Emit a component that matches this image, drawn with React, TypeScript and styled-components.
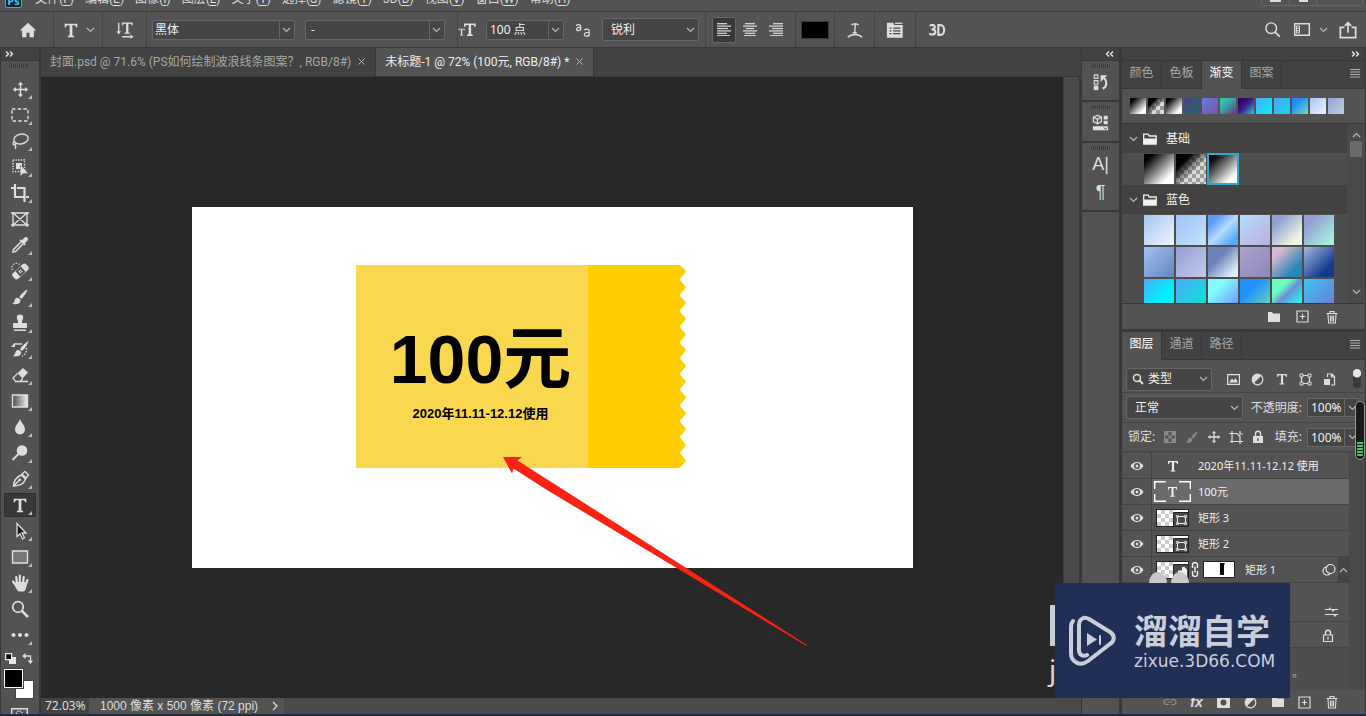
import React from "react";
import styled, { createGlobalStyle, css } from "styled-components";

const GlobalStyle = createGlobalStyle`
  *, *::before, *::after { box-sizing: border-box; }
  body { margin: 0; background: #282828; }
  body, button, input, select {
    font-family: "Noto Sans", "Noto Sans CJK SC", sans-serif;
    font-size: 12px;
    line-height: 16px;
    color: #dedede;
  }
  button { margin: 0; padding: 0; border: 0; background: none; cursor: pointer; }
  svg { display: block; flex: none; }
  ul { list-style: none; margin: 0; padding: 0; }
`;

const c = {
  panel: "#535353",
  dark: "#424242",
  line: "#383838",
  list: "#4a4a4a",
  field: "#454545",
  edge: "#666666",
  icon: "#dedede",
  dim: "#a8a8a8",
};

/* ---------- icons ---------- */

type IconProps = { size?: number; w?: number; h?: number; box?: string; children: React.ReactNode };
const Icon = ({ size = 20, w, h, box, children }: IconProps) => (
  <svg
    width={w ?? size}
    height={h ?? size}
    viewBox={box ?? "0 0 20 20"}
    fill="none"
    stroke="currentColor"
    strokeWidth="1.4"
    aria-hidden="true"
  >
    {children}
  </svg>
);

const Chevron = ({ up = false }: { up?: boolean }) => (
  <Icon w={9} h={6} box="0 0 9 6">
    <path d={up ? "M1 5 4.5 1.5 8 5" : "M1 1 4.5 4.5 8 1"} stroke="#b8b8b8" strokeWidth="1.2" />
  </Icon>
);

const DoubleChevron = ({ left = false }: { left?: boolean }) => (
  <Icon w={9} h={6} box="0 0 9 6">
    <path
      d={left ? "M4 .5 1.5 3 4 5.500M8 .5 5.500 3 8 5.500" : "M1 .5 3.500 3 1 5.500M5 .5 7.500 3 5 5.500"}
      strokeWidth="1.4"
    />
  </Icon>
);

const serifT = "M3 3h14v4.200h-1.200C15.400 5.400 14.800 4.800 13 4.800h-1.500v10.400c0 1 .4 1.300 2 1.300V18h-7v-1.500c1.600 0 2-.3 2-1.300V4.800H7C5.200 4.800 4.600 5.400 4.200 7.200H3z";
const TypeIcon = ({ size = 18 }: { size?: number }) => (
  <Icon size={size}>
    <path d={serifT} fill="currentColor" stroke="none" />
  </Icon>
);

const PlusBox = () => (
  <Icon size={13} box="0 0 13 13">
    <path d="M1 1h11v11H1zM6.500 3.800v5.400M3.800 6.500h5.400" strokeWidth="1.2" />
  </Icon>
);
const TrashIcon = () => (
  <Icon size={14} box="0 0 14 14">
    <path d="M1.500 3.500h11M5 3V1.500h4V3M3 4l.6 9h6.800L11 4M5.500 5.500v6M7 5.500v6M8.500 5.500v6" strokeWidth="1.1" />
  </Icon>
);
const FolderSolid = () => (
  <Icon w={14} h={12} box="0 0 14 12">
    <path d="M1 1h4l1 1.500h7V11H1z" fill="currentColor" stroke="none" />
  </Icon>
);
const FolderOutline = () => (
  <Icon w={14} h={12} box="0 0 14 12">
    <path d="M.7 11V1.200h4.500l1 1.800h7V11z" strokeWidth="1.300" />
    <path d="M1 5.500h12V11H1z" fill="currentColor" stroke="none" />
  </Icon>
);
const MenuLines = () => (
  <Icon w={10} h={9} box="0 0 10 9">
    <path d="M0 .5h10M0 3h10M0 5.500h10M0 8h10" stroke="#b0b0b0" strokeWidth="1" />
  </Icon>
);
const LockIcon = ({ open = false }: { open?: boolean }) => (
  <Icon w={12} h={14} box="0 0 12 14">
    <path d="M3.500 6V3.800a2.500 2.500 0 0 1 5 0V6" strokeWidth="1.400" />
    {open ? (
      <path d="M1.500 6h9v6.500h-9zM6 8v2.500" strokeWidth="1.200" />
    ) : (
      <path d="M1 6h10v7H1zm5 2a1 1 0 0 0-.6 1.700V11h1.200V9.700A1 1 0 0 0 6 8z" fill="currentColor" stroke="none" fillRule="evenodd" />
    )}
  </Icon>
);
const MoveIcon = ({ size = 18 }: { size?: number }) => (
  <Icon size={size}>
    <path d="M10 3v14M3 10h14" strokeWidth="1.800" />
    <path
      d="M10 1l3 3.500H7zM10 19l3-3.500H7zM1 10l3.500-3v6zM19 10l-3.500-3v6z"
      fill="currentColor"
      stroke="none"
    />
  </Icon>
);
const BrushIcon = ({ size = 18 }: { size?: number }) => (
  <Icon size={size}>
    <path d="M18.500 1.500c-3 1.500-7 5-9.300 8.500l2.300 2.200c3-2.700 6-7 7-10.700z" fill="currentColor" stroke="none" />
    <path d="M8.300 11c-2.500-.4-4 1.200-4.300 3.200-.2 1.500-1.200 2.800-2.700 3.300 3.500 1.300 9.500.5 9.300-4.200z" fill="currentColor" stroke="none" />
  </Icon>
);
const EyeIcon = () => (
  <Icon w={14} h={10} box="0 0 14 10">
    <path d="M.5 5C3.500-.5 10.500-.5 13.500 5 10.500 10.500 3.500 10.500.5 5z" fill="currentColor" stroke="none" />
    <circle cx="7" cy="5" r="3" fill="#4c4c4c" stroke="none" />
    <circle cx="7" cy="5" r="1.500" fill="currentColor" stroke="none" />
  </Icon>
);
const AdjustIcon = () => (
  <Icon size={13} box="0 0 13 13">
    <circle cx="6.500" cy="6.500" r="5.300" strokeWidth="1.200" />
    <path d="M10.300 2.700A5.400 5.400 0 0 0 2.700 10.300z" fill="currentColor" stroke="none" />
  </Icon>
);
const ShapeBoxIcon = () => (
  <Icon size={13} box="0 0 13 13">
    <path d="M3 2.500h7M3 10.500h7M2.500 3v7M10.500 3v7" strokeWidth="1.200" />
    <path d="M1 1h3v3H1zM9 1h3v3H9zM1 9h3v3H1zM9 9h3v3H9z" strokeWidth="1" fill={c.panel} />
  </Icon>
);

const tools: { name: string; icon: React.ReactNode; plain?: boolean }[] = [
  { name: "移动工具", icon: <MoveIcon size={17} /> },
  { name: "矩形选框工具", icon: <Icon><path d="M2 4h16v12H2z" strokeDasharray="3.500 2.200" /></Icon> },
  {
    name: "套索工具",
    icon: (
      <Icon>
        <ellipse cx="11" cy="8" rx="7.300" ry="4.800" transform="rotate(-12 11 8)" />
        <path d="M4.500 11c-1.800.5-2 2.800-.2 3 1.500.1 2-1.300.8-2.300M4.800 14c1.200 1 1.200 2.500.4 4" strokeWidth="1.300" />
      </Icon>
    ),
  },
  {
    name: "对象选择工具",
    icon: (
      <Icon>
        <path d="M3 3h11.500v11.500H3z" strokeDasharray="1.300 1.300" />
        <path d="M6 6h6v3l-2-1v4H6z" fill="currentColor" stroke="none" />
        <path d="M10.500 8v11l2.700-2.700H18z" fill="currentColor" stroke="none" />
      </Icon>
    ),
  },
  { name: "裁剪工具", icon: <Icon><path d="M5 1v13h9M1 5h3M16 14h3M7 5h7.500v11.500M14.500 16v3" strokeWidth="2.200" /></Icon> },
  {
    name: "图框工具",
    plain: true,
    icon: <Icon><path d="M3 4h14v12H3zM3 4l14 12M17 4 3 16M1 4h2M17 4h2M1 16h2M17 16h2M3 3v1M17 3v1M3 16v2M17 16v2" strokeWidth="1.300" /></Icon>,
  },
  {
    name: "吸管工具",
    icon: (
      <Icon>
        <path d="M11 7 3.500 14.500 3 17l2.500-.5L13 9" strokeWidth="1.600" />
        <path d="M9.500 5.500l5 5 1.300-1.300-1-1 2.700-2.700c1.800-1.800-1-4.800-3-3l-2.700 2.700-1-1z" fill="currentColor" stroke="none" />
      </Icon>
    ),
  },
  {
    name: "污点修复画笔工具",
    icon: (
      <Icon>
        <rect x="1.500" y="6.500" width="18" height="8" rx="2.500" transform="rotate(-42 10.500 10.500)" fill="currentColor" stroke="none" />
        <rect x="7" y="7" width="7" height="7" transform="rotate(-42 10.500 10.500)" fill="#4a4a4a" stroke="none" />
        <path d="M8.500 10.500h4M10.500 8.500v4" strokeWidth="1.400" strokeDasharray="1.500 1" />
        <path d="M2.500 9A4.500 4.500 0 0 1 9.500 3.500" strokeDasharray="1.300 1.500" strokeWidth="1.300" />
      </Icon>
    ),
  },
  { name: "画笔工具", icon: <BrushIcon /> },
  {
    name: "仿制图章工具",
    icon: (
      <Icon>
        <path d="M10 1.500a3.200 3.200 0 0 1 3.200 3.300c0 2-1.500 2.700-1.300 5.200H17v5H3v-5h5.100c.2-2.500-1.300-3.200-1.300-5.200A3.200 3.200 0 0 1 10 1.500z" fill="currentColor" stroke="none" />
        <path d="M4 17.200h12" strokeWidth="1.500" />
      </Icon>
    ),
  },
  {
    name: "历史记录画笔工具",
    icon: (
      <Icon>
        <path d="M18.500 2c-3.500 2-6.500 5-8.500 8.200l2 1.800c3-2.700 5.500-6.200 6.500-10z" fill="currentColor" stroke="none" />
        <path d="M9 11c-3-.5-3.500 2-4 3.500-.4 1.500-1.500 2.200-2.500 2.500 3.500 1 9 .5 8.700-4z" fill="currentColor" stroke="none" />
        <path d="M1 8l4-4.500V8z" fill="currentColor" stroke="none" />
        <path d="M4 5h8" strokeWidth="1.500" />
        <path d="M16.500 9c.5 4-1.500 7-4.500 8" strokeDasharray="1.400 1.600" />
      </Icon>
    ),
  },
  {
    name: "橡皮擦工具",
    icon: (
      <Icon>
        <path d="M7.500 8.300 13 3l5 4.500-5.500 6z" fill="currentColor" stroke="none" />
        <path d="M7.500 8.500 3 13l2.500 3.300h4.800l2.500-2.800M5 16.500h13" strokeWidth="1.300" />
      </Icon>
    ),
  },
  {
    name: "渐变工具",
    icon: (
      <Icon>
        <defs>
          <linearGradient id="tool-gradient">
            <stop offset="0" stopColor="#4a4a4a" />
            <stop offset="1" stopColor="#f0f0f0" />
          </linearGradient>
        </defs>
        <path d="M2.500 4h15v12h-15z" fill="url(#tool-gradient)" />
      </Icon>
    ),
  },
  { name: "模糊工具", icon: <Icon><path d="M10 2c1 3.500 5 6.500 5 10.500a5 5 0 0 1-10 0C5 8.500 9 5.500 10 2z" fill="currentColor" stroke="none" /></Icon> },
  {
    name: "减淡工具",
    icon: (
      <Icon>
        <circle cx="12" cy="7.500" r="5.300" fill="currentColor" stroke="none" />
        <path d="M8.500 11 2.500 17" strokeWidth="2" />
      </Icon>
    ),
  },
  {
    name: "钢笔工具",
    icon: (
      <Icon>
        <path d="M3.500 17C3.800 12.500 5 8.500 11.500 6l4 4c-2 5.500-5.500 6.500-12 7z" strokeWidth="1.500" />
        <path d="M3.500 17 9 11.500M12 5l3-2.500L18.500 6 16 9z" />
        <circle cx="9.800" cy="10.800" r="1.400" fill="currentColor" stroke="none" />
      </Icon>
    ),
  },
  { name: "横排文字工具", icon: <TypeIcon size={18} /> },
  {
    name: "路径选择工具",
    icon: <Icon><path d="M7 2.500v13l3-2.700 2.500 5 2-1-2.500-4.800h4z" fill="#1c1c1c" strokeWidth="1.300" /></Icon>,
  },
  { name: "矩形工具", icon: <Icon><path d="M2.500 4h15v12h-15z" fill="#777" /></Icon> },
  {
    name: "抓手工具",
    icon: (
      <Icon>
        <path d="M5.500 11 3 8.500M7 10 6.200 4M9.800 9.500V2.500M13 10l.7-6M15.800 11.500l1.700-4.500" strokeWidth="2.200" strokeLinecap="round" />
        <path d="M4.500 9.500 6 10l1-1h7l3 1c-.3 4-1.500 8-3.500 8.500H8.500C6.500 17 5.500 13 2 9z" fill="currentColor" stroke="none" />
      </Icon>
    ),
  },
  {
    name: "缩放工具",
    plain: true,
    icon: (
      <Icon>
        <circle cx="8" cy="8" r="5.300" strokeWidth="1.700" />
        <path d="M12 12l6 6" strokeWidth="2.500" />
      </Icon>
    ),
  },
  {
    name: "编辑工具栏",
    icon: (
      <Icon>
        <g fill="currentColor" stroke="none">
          <circle cx="3.500" cy="10" r="2" />
          <circle cx="10" cy="10" r="2" />
          <circle cx="16.500" cy="10" r="2" />
        </g>
      </Icon>
    ),
  },
];

/* ---------- frame ---------- */

const Shell = styled.div`
  position: relative;
  display: flex;
  flex-direction: column;
  height: 100vh;
  overflow: hidden;
  background: ${c.panel};
  border-bottom: 2px solid #242c3c;
  color: ${c.icon};
`;

const MenuBar = styled.nav`
  display: flex;
  align-items: flex-end;
  gap: 11px;
  flex: none;
  height: 12px;
  padding: 0 3px 4px 5px;
  overflow: hidden;
  border-bottom: 1px solid ${c.line};
`;
const MenuItem = styled.button`
  flex: none;
  white-space: nowrap;
  font-family: Roboto, "Noto Sans CJK SC", sans-serif;
  u { text-underline-offset: 2px; }
`;
const AppMark = styled.span`
  flex: none;
  width: 17px;
  height: 14px;
  margin: 0 2px -1px 0;
  border: 1px solid #2bb5d6;
  border-radius: 2px;
  background: #0b2536;
  color: #4cc5ee;
  font-weight: 700;
  font-size: 11px;
  line-height: 12px;
  text-align: center;
`;
const WindowButtons = styled.div`
  display: flex;
  margin-left: auto;
  margin-bottom: 1px;
  height: 14px;
  border: 1px solid ${c.edge};
  border-radius: 0 0 3px 3px;
`;
const WindowButton = styled.button<{ $wide?: boolean }>`
  display: flex;
  align-items: flex-end;
  justify-content: center;
  width: ${(p) => (p.$wide ? 46 : 27)}px;
  padding-bottom: 3px;
  & + & { border-left: 1px solid ${c.edge}; }
`;

const OptionsBar = styled.header`
  display: flex;
  align-items: stretch;
  flex: none;
  height: 36px;
  border-bottom: 1px solid ${c.line};
`;
const Segment = styled.div<{ $w?: number; $pad?: string; $gap?: number; $last?: boolean }>`
  display: flex;
  align-items: center;
  justify-content: ${(p) => (p.$w ? "center" : "flex-start")};
  flex: none;
  gap: ${(p) => p.$gap ?? 0}px;
  width: ${(p) => (p.$w ? `${p.$w}px` : "auto")};
  padding: ${(p) => p.$pad ?? "0"};
  border-right: ${(p) => (p.$last ? "0" : `1px solid #444`)};
`;
const Spacer = styled.div`
  flex: 1;
`;
const IconButton = styled.button<{ $w?: number; $h?: number; $gap?: number; $on?: boolean; $dim?: boolean }>`
  display: flex;
  align-items: center;
  justify-content: center;
  flex: none;
  gap: ${(p) => p.$gap ?? 6}px;
  width: ${(p) => p.$w ?? 24}px;
  height: ${(p) => p.$h ?? 26}px;
  border-radius: 2px;
  color: ${(p) => (p.$dim ? "#8a8a8a" : c.icon)};
  ${(p) => p.$on && css`background: #383838; box-shadow: inset 0 0 0 1px ${c.edge};`}
`;
const ColorChip = styled.button`
  width: 28px;
  height: 18px;
  background: #000;
  border: 1px solid #3a3a3a;
`;

const SelectWrap = styled.span<{ $w: number; $h: number; $split?: boolean }>`
  display: grid;
  align-items: center;
  flex: none;
  width: ${(p) => p.$w}px;
  height: ${(p) => p.$h}px;
  background: ${c.field};
  border: 1px solid ${c.edge};
  border-radius: 2px;
  > * { grid-area: 1 / 1; }
  > svg { justify-self: end; margin-right: 3px; pointer-events: none; }
  ${(p) =>
    p.$split &&
    css`background: linear-gradient(to left, transparent 14px, ${c.edge} 14px, ${c.edge} 15px, transparent 15px), ${c.field};`}
`;
const NativeSelect = styled.select<{ $pl?: number }>`
  appearance: none;
  width: 100%;
  height: 100%;
  padding: 0 16px 0 ${(p) => p.$pl ?? 5}px;
  border: 0;
  background: transparent;
  color: #f2f2f2;
`;
type DropProps = { label: string; value: string; w: number; h?: number; split?: boolean; pl?: number };
const Drop = ({ label, value, w, h = 20, split, pl }: DropProps) => (
  <SelectWrap $w={w} $h={h} $split={split}>
    <NativeSelect aria-label={label} $pl={pl} defaultValue={value}>
      <option>{value}</option>
    </NativeSelect>
    <Chevron />
  </SelectWrap>
);

const Work = styled.div`
  display: flex;
  flex: 1;
  min-height: 0;
`;

/* ---------- tool column ---------- */

const ToolColumn = styled.aside`
  display: flex;
  flex-direction: column;
  flex: none;
  width: 41px;
  border-right: 2px solid ${c.line};
  border-left: 1px solid ${c.line};
  overflow: hidden;
`;
const Collapse = styled.button<{ $end?: boolean }>`
  display: flex;
  align-items: center;
  justify-content: ${(p) => (p.$end ? "flex-end" : "flex-start")};
  flex: none;
  width: 100%;
  height: 13px;
  padding: 0 5px 0 4px;
  background: ${c.dark};
  border-bottom: 1px solid ${c.line};
  color: #e8e8e8;
`;
const Grip = styled.div<{ $m?: string }>`
  flex: none;
  width: 20px;
  height: 4px;
  margin: ${(p) => p.$m ?? "3px auto 0"};
  background: repeating-linear-gradient(to right, #3c3c3c 0 1px, transparent 1px 2px);
`;
const ToolList = styled.div`
  display: flex;
  flex-direction: column;
  gap: 2px;
  padding-left: 3px;
`;
const Tool = styled.button<{ $on?: boolean; $plain?: boolean }>`
  position: relative;
  display: flex;
  align-items: center;
  justify-content: center;
  width: 32px;
  height: 24px;
  border-radius: 2px;
  color: ${c.icon};
  ${(p) => p.$on && css`background: #383838; box-shadow: inset 0 0 0 1px #2e2e2e;`}
  &::after {
    content: "";
    position: absolute;
    right: 4px;
    bottom: 2px;
    border: 2px solid transparent;
    border-right-color: #bbb;
    border-bottom-color: #bbb;
    display: ${(p) => (p.$plain ? "none" : "block")};
  }
`;
const ColorTools = styled.div`
  display: flex;
  justify-content: space-between;
  padding: 6px 6px 5px 4px;
`;
const ColorPair = styled.div`
  position: relative;
  flex: none;
  width: 30px;
  height: 30px;
  margin-left: 3px;
`;
const ColorWell = styled.button<{ $front?: boolean }>`
  position: absolute;
  width: 19px;
  height: 19px;
  ${(p) =>
    p.$front
      ? css`left: 0; top: 0; background: #000; border: 1px solid #fff; box-shadow: 0 0 0 1px #444; z-index: 1;`
      : css`right: 0; bottom: 0; background: #fff; border: 1px solid #444;`}
`;
const QuickMask = styled.button`
  display: flex;
  margin: 9px auto 0 10px;
  color: ${c.icon};
`;

/* ---------- document ---------- */

const DocColumn = styled.main`
  display: flex;
  flex-direction: column;
  flex: 1;
  min-width: 0;
`;
const DocTabs = styled.div`
  display: flex;
  flex: none;
  height: 29px;
  background: ${c.dark};
  border-bottom: 1px solid ${c.line};
`;
const DocTab = styled.div<{ $on?: boolean }>`
  display: flex;
  align-items: center;
  gap: 7px;
  padding: 0 10px 1px 9px;
  white-space: nowrap;
  border-right: 1px solid ${c.line};
  background: ${(p) => (p.$on ? c.panel : "transparent")};
  button {
    font-family: Roboto, "Noto Sans CJK SC", sans-serif;
    color: ${(p) => (p.$on ? "#f0f0f0" : c.dim)};
  }
`;
const CloseX = styled.button`
  display: flex;
`;
const DocBody = styled.div`
  display: flex;
  flex: 1;
  min-height: 0;
`;
const Viewport = styled.div`
  display: flex;
  align-items: center;
  justify-content: center;
  flex: 1;
  min-width: 0;
  background: #282828;
`;
const VScroll = styled.div`
  flex: none;
  width: 18px;
  background: ${c.list};
  border-right: 2px solid ${c.line};
  border-left: 1px solid #404040;
`;
const Artboard = styled.div`
  position: relative;
  flex: none;
  width: 721px;
  height: 361px;
  background: #fff;
  color: #000;
`;
const Coupon = styled.div`
  position: absolute;
  left: 164px;
  top: 58px;
  width: 330px;
  height: 203px;
  > svg { position: absolute; inset: 0; }
`;
const CouponText = styled.div`
  position: relative;
  display: flex;
  flex-direction: column;
  align-items: center;
  gap: 7px;
  width: 232px;
  padding: 54px 0 0 18px;
  font-family: "Liberation Sans", "Noto Sans CJK SC", sans-serif;
  white-space: nowrap;
`;
const Amount = styled.strong`
  font-size: 68px;
  line-height: 80px;
  font-weight: 700;
`;
const Validity = styled.span`
  font-size: 13px;
  line-height: 16px;
  font-weight: 700;
`;
const Arrow = styled.svg`
  position: absolute;
  left: 311px;
  top: 250px;
  z-index: 2;
`;

const StatusBar = styled.footer`
  display: flex;
  flex: none;
  height: 16px;
  background: ${c.list};
`;
const StatusItem = styled.span<{ $w?: number; $bg: string }>`
  display: flex;
  align-items: center;
  gap: 14px;
  width: ${(p) => (p.$w ? `${p.$w}px` : "auto")};
  padding: 0 6px 0 ${(p) => (p.$w ? 4 : 11)}px;
  white-space: nowrap;
  font-family: ${(p) => (p.$w ? "inherit" : `"Liberation Sans", "Noto Sans CJK SC", sans-serif`)};
  background: ${(p) => p.$bg};
`;

/* ---------- right dock ---------- */

const IconDock = styled.aside`
  display: flex;
  flex-direction: column;
  flex: none;
  width: 41px;
  border-right: 3px solid ${c.line};
  border-left: 1px solid ${c.line};
`;
const DockGroup = styled.div<{ $h: number }>`
  display: flex;
  flex-direction: column;
  align-items: center;
  flex: none;
  height: ${(p) => p.$h}px;
  border-bottom: 2px solid ${c.line};
`;
const DockGlyph = styled.span`
  font-family: "Liberation Sans", sans-serif;
  font-size: 18px;
  line-height: 28px;
`;
const Panels = styled.aside`
  display: flex;
  flex-direction: column;
  flex: none;
  width: 244px;
  border-right: 1px solid ${c.line};
`;
const PanelTabs = styled.div`
  display: flex;
  align-items: stretch;
  flex: none;
  height: 28px;
  background: ${c.dark};
`;
const PanelTab = styled.button<{ $on?: boolean }>`
  width: 40px;
  padding-bottom: 3px;
  border-right: 1px solid ${c.line};
  border-bottom: 1px solid ${(p) => (p.$on ? c.panel : c.line)};
  background: ${(p) => (p.$on ? c.panel : "transparent")};
  color: ${(p) => (p.$on ? "#fff" : c.dim)};
`;
const TabFill = styled.div`
  display: flex;
  align-items: center;
  justify-content: flex-end;
  flex: 1;
  padding: 0 5px 2px 0;
  border-bottom: 1px solid ${c.line};
`;
const Recent = styled.div`
  display: flex;
  flex: none;
  gap: 2px;
  height: 35px;
  padding: 9px 0 0 8px;
  border-bottom: 1px solid ${c.line};
`;
const Swatch = styled.button<{ $bg: string; $size: number; $on?: boolean }>`
  flex: none;
  width: ${(p) => p.$size}px;
  height: ${(p) => p.$size}px;
  background: ${(p) => p.$bg};
  box-shadow: ${(p) => (p.$on ? "0 0 0 1px #29a9d6, inset 0 0 0 1px #29a9d6" : "none")};
`;
const PresetArea = styled.div`
  display: flex;
  flex: none;
  height: 180px;
  border-bottom: 1px solid ${c.line};
`;
const PresetList = styled.div`
  flex: 1;
  overflow: hidden;
  background: #4e4e4e;
`;
const GroupHead = styled.button`
  display: flex;
  align-items: center;
  gap: 5px;
  width: 100%;
  height: 29px;
  padding-left: 7px;
  background: ${c.dark};
  color: #f2f2f2;
  span { margin-left: 4px; }
`;
const SwatchGrid = styled.div`
  display: grid;
  grid-template-columns: repeat(6, 30px);
  gap: 2px;
  padding: 1px 0 1px 22px;
`;
const PresetScroll = styled.div`
  display: flex;
  flex-direction: column;
  align-items: center;
  width: 18px;
  padding: 8px 0;
  background: ${c.list};
`;
const Thumb = styled.div`
  width: 12px;
  height: 16px;
  margin: 3px 0 auto;
  background: #6a6a6a;
`;
const PanelFoot = styled.div<{ $h: number; $gap: number }>`
  display: flex;
  align-items: center;
  justify-content: flex-end;
  flex: none;
  gap: ${(p) => p.$gap}px;
  height: ${(p) => p.$h}px;
  padding-right: 26px;
`;
const PanelGap = styled.div`
  flex: none;
  height: 3px;
  background: ${c.line};
`;
const FootButton = styled.button<{ $dim?: boolean }>`
  display: flex;
  align-items: center;
  justify-content: center;
  width: 15px;
  height: 18px;
  color: ${(p) => (p.$dim ? "#8c8c8c" : c.icon)};
  font: italic 700 14px/16px "Liberation Sans", sans-serif;
`;

const LayerRowBar = styled.div<{ $h: number; $gap: number; $pl?: number; $pt?: number }>`
  display: flex;
  align-items: center;
  flex: none;
  gap: ${(p) => p.$gap}px;
  height: ${(p) => p.$h}px;
  padding-left: ${(p) => p.$pl ?? 4}px;
  padding-top: ${(p) => p.$pt ?? 0}px;
  border-bottom: 1px solid #444;
  overflow: hidden;
`;
const FilterToggle = styled.button`
  width: 8px;
  height: 19px;
  margin: 0 4px 2px auto;
  border-radius: 4px;
  background: radial-gradient(circle at 4px 4px, #e4e4e4 4px, #3a3a3a 5px);
`;
const PercentLabel = styled.label`
  display: flex;
  align-items: center;
  gap: 5px;
  margin-left: auto;
  padding-right: 6px;
  white-space: nowrap;
`;
const PercentBox = styled.span`
  display: flex;
  align-items: center;
  width: 52px;
  height: 19px;
  border: 1px solid ${c.edge};
  background: ${c.field};
  input {
    width: 37px;
    height: 100%;
    padding: 0 0 0 3px;
    border: 0;
    border-right: 1px solid ${c.edge};
    background: transparent;
    color: #f2f2f2;
  }
  button { display: flex; padding-left: 3px; }
`;
const LayerArea = styled.div`
  display: flex;
  flex: 1;
  min-height: 0;
`;
const LayerList = styled.ul`
  flex: 1;
  padding-top: 1px;
  overflow: hidden;
  background: #4e4e4e;
`;
const LayerScroll = styled.div`
  width: 16px;
  background: ${c.list};
  border-left: 1px solid #474747;
`;
const LayerItem = styled.li`
  display: flex;
  align-items: stretch;
  height: 26px;
  background: ${c.panel};
  border-bottom: 1px solid #444;
  color: #f0f0f0;
  font-size: 11px;
`;
const EyeButton = styled.button`
  display: flex;
  align-items: center;
  justify-content: center;
  flex: none;
  width: 30px;
  border-right: 1px solid #444;
  background: ${c.panel};
  color: ${c.icon};
`;
const LayerBody = styled.div<{ $on?: boolean }>`
  display: flex;
  align-items: center;
  flex: 1;
  padding-left: 2px;
  background: ${(p) => (p.$on ? "#6a6a6a" : "transparent")};
`;
const LayerThumb = styled.span`
  display: flex;
  align-items: center;
  justify-content: center;
  flex: none;
  width: 37px;
  margin-right: 7px;
`;
const MaskGroup = styled.span`
  display: flex;
  align-items: center;
  gap: 4px;
  margin: 0 10px 0 -7px;
`;
const LayerEnd = styled.span`
  display: flex;
  align-items: center;
  align-self: stretch;
  gap: 2px;
  margin-left: auto;
`;
const FoldButton = styled.button`
  display: flex;
  align-items: center;
  justify-content: center;
  align-self: stretch;
  width: 11px;
  background: #454545;
`;
const SubRow = styled.div<{ $h: number; $pr: number }>`
  display: flex;
  align-items: flex-end;
  justify-content: flex-end;
  height: ${(p) => p.$h}px;
  padding: 0 ${(p) => p.$pr}px 4px 0;
  background: ${c.panel};
  border-bottom: 1px solid #444;
`;
const Hint = styled.p`
  margin: 17px 0 0 170px;
  color: #b0b0b0;
`;

/* ---------- overlays ---------- */

const Meter = styled.div`
  position: absolute;
  right: 1px;
  top: 401px;
  width: 10px;
  height: 59px;
  padding: 40px 1px 2px;
  border: 1px solid #9a9a9a;
  border-radius: 5px;
  background: #1a1a1a;
  &::after {
    content: "";
    display: block;
    height: 15px;
    border-radius: 0 0 3px 3px;
    background: repeating-linear-gradient(to bottom, #49c765 0 2px, #1a1a1a 2px 3px);
  }
`;
const Watermark = styled.div`
  position: absolute;
  right: 76px;
  bottom: 16px;
  width: 235px;
  height: 115px;
`;
const UnderMark = styled.div`
  position: absolute;
  left: -6px;
  top: -11px;
  width: 140px;
  height: 126px;
  color: #d8d8d8;
  > svg { position: absolute; left: 0; top: 0; }
  > span { position: absolute; left: 0; top: 80px; font-size: 28px; line-height: 34px; }
`;
const BrandCard = styled.div`
  position: relative;
  display: flex;
  align-items: center;
  gap: 17px;
  height: 100%;
  padding-left: 14px;
  background: #202f55;
  color: #c9ced9;
`;
const BrandText = styled.div`
  display: flex;
  flex-direction: column;
  white-space: nowrap;
  strong { font: 700 34px/38px "Noto Sans CJK SC", sans-serif; }
  span { margin-top: 2px; font: 400 17px/20px "DejaVu Sans", sans-serif; }
`;

/* ---------- data ---------- */

const menus: [string, string][] = [
  ["文件", "F"], ["编辑", "E"], ["图像", "I"], ["图层", "L"], ["文字", "Y"], ["选择", "S"],
  ["滤镜", "T"], ["3D", "D"], ["视图", "V"], ["窗口", "W"], ["帮助", "H"],
];

const g = (...stops: string[]) => `linear-gradient(135deg, ${stops.join(", ")})`;
const bw = g("#000 15%", "#fff 80%");
const fade = `linear-gradient(135deg, #000 25%, transparent 60%), repeating-conic-gradient(#9a9a9a 0 25%, #dcdcdc 0 50%) 0 0 / 8px 8px`;
const recent = [
  bw, fade, bw,
  g("#4b4580", "#276572"), g("#667de6", "#7a50a6"), g("#2fc3ae 20%", "#3f9aa0 50%", "#6a2f80"),
  g("#2b0a5e 20%", "#3d1f8f 50%", "#24d0c8"), g("#4fa9fc", "#00f0ff"), g("#4aa5fb", "#14d8e8"),
  g("#1f8cfb 30%", "#6fe0b4"), g("#a5c6ee", "#eef4ff"), g("#95a1d4", "#c3cfe6"),
];
const blues = [
  g("#a3c6ee", "#eef4ff"), g("#a0c2fb", "#c2e4fc"), g("#5b9bfb 20%", "#b4dcff 50%", "#5aa8f8 85%"),
  g("#b0defc", "#c0aee0"), g("#92a0d4 20%", "#eef4e0 80%"), g("#939dd6 20%", "#a6f2dc 90%"),
  g("#a4c2f4", "#6286bf"), g("#939fd2", "#c2cbe8"), g("#6c82b8 35%", "#d8eef4 85%"),
  g("#aaa4cc", "#8e86bc"), g("#d8b8cc 20%", "#2a86b8 75%"), g("#a4b8e4", "#143a8c 75%"),
  g("#4fa9fc", "#00f0ff 60%"), g("#4fa5fc", "#18d8dc 70%"), g("#84fcff 30%", "#6a8cf8"),
  g("#2090fc 35%", "#6fe0b4"), g("#6affc0 30%", "#6a90d8 50%", "#30e8f0 80%"), g("#3cc4f0", "#7078d4"),
];

const checker = (
  <>
    <rect x=".5" y=".5" width="32" height="17" fill="#fff" stroke="#222" strokeWidth="1" />
    {[0, 1, 2, 3].flatMap((r) =>
      [0, 1, 2, 3].map((k) =>
        (r + k) % 2 ? <rect key={`${r}-${k}`} x={1 + k * 4} y={1 + r * 4} width="4" height="4" fill="#ccc" stroke="none" /> : null
      )
    )}
    <path d="M17.500 3.500h15v14h-15z" fill="#4a4a4a" stroke="#222" strokeWidth="1" />
  </>
);
const ShapeThumb = ({ smart = false }: { smart?: boolean }) => (
  <Icon w={33} h={18} box="0 0 33 18">
    {checker}
    {smart ? (
      <path d="M22 15V9.500h4V6h2.500l2.500 2.500V15z" fill="currentColor" stroke="none" />
    ) : (
      <>
        <path d="M21.500 7.500h8v7h-8z" strokeWidth="1" />
        <path d="M20 6h3v3h-3zM28 6h3v3h-3zM20 13h3v3h-3zM28 13h3v3h-3z" fill="#bdbdbd" stroke="none" />
      </>
    )}
  </Icon>
);
const SelectedType = () => (
  <Icon w={37} h={21} box="0 0 37 21">
    <path d="M.7 8V.7h11M25 .7h11.300V8M36.300 13v7.300H25M12 20.300H.7V13" stroke="#fff" />
    <path d={serifT} transform="translate(12 4) scale(.65)" fill="currentColor" stroke="none" />
  </Icon>
);
const layers = [
  { name: "2020年11.11-12.12 使用", thumb: <TypeIcon size={14} /> },
  { name: "100元", thumb: <SelectedType />, on: true },
  { name: "矩形 3", thumb: <ShapeThumb /> },
  { name: "矩形 2", thumb: <ShapeThumb /> },
  { name: "矩形 1", thumb: <ShapeThumb smart />, mask: true },
];

const toothedEdge = () => {
  let d = "M232 0H322Q324 0 325 1";
  for (let i = 0; i < 13; i++) {
    const t = 6.5 + i * 15.75;
    d += `L328.500 ${t - 2}Q331 ${t} 328.500 ${t + 2}`;
    if (i < 12) d += `L325 ${t + 6}Q323 ${t + 7.9} 325 ${t + 9.700}`;
  }
  return d + "L325 201.500Q323 203 321 203H232Z";
};

const AlignIcon = ({ rows }: { rows: [number, number][] }) => (
  <Icon w={14} h={13} box="0 0 14 13">
    {rows.map(([x, w], i) => (
      <path key={i} d={`M${x} ${i * 2.400 + 0.700}h${w}`} strokeWidth="1.200" />
    ))}
  </Icon>
);
const alignments: { name: string; rows: [number, number][] }[] = [
  { name: "左对齐", rows: [[0, 10], [0, 14], [0, 11], [0, 14], [0, 10], [0, 13]] },
  { name: "居中对齐", rows: [[2, 10], [0, 14], [3, 8], [0, 14], [2, 10], [1, 12]] },
  { name: "右对齐", rows: [[4, 10], [0, 14], [3, 11], [0, 14], [4, 10], [1, 13]] },
];

/* ---------- page parts ---------- */

const Options = () => (
  <OptionsBar>
    <Segment $w={54} $pad="0 0 0 2px">
      <IconButton aria-label="主页">
        <Icon size={18}>
          <path d="M10 2 .8 10.500h2.700V18h4.800v-5h3.400v5h4.800v-7.500h2.700z" fill="currentColor" stroke="none" />
        </Icon>
      </IconButton>
    </Segment>
    <Segment $w={49}>
      <IconButton $w={40} aria-label="文字工具预设">
        <TypeIcon size={18} />
        <Chevron />
      </IconButton>
    </Segment>
    <Segment $w={44}>
      <IconButton aria-label="切换文本取向">
        <Icon size={18}>
          <path d="M3 2v11M7 17.500h9" strokeWidth="1.500" />
          <path d="M.5 11.500h5l-2.500 3.500zM16 15v5l3.500-2.500z" fill="currentColor" stroke="none" />
          <path d={serifT} transform="translate(4 -1) scale(.85)" fill="currentColor" stroke="none" />
        </Icon>
      </IconButton>
    </Segment>
    <Segment $gap={10} $pad="0 12px 0 5px">
      <Drop label="字体系列" value="黑体" w={143} split pl={2} />
      <Drop label="字体样式" value="-" w={140} split pl={5} />
    </Segment>
    <Segment $gap={10} $pad="0 6px 0 0">
      <Icon size={18}>
        <path d={serifT} transform="translate(4 0) scale(.92)" fill="currentColor" stroke="none" />
        <path d={serifT} transform="translate(-1 7) scale(.5)" fill="currentColor" stroke="none" />
      </Icon>
      <Drop label="字体大小" value="100 点" w={78} split pl={3} />
      <Icon w={18} h={16} box="1 0 16 14">
        <path d="M3 3.200C4 1.800 7 1.800 7 4v3.500M7 4.500C2.500 4.500 2.500 7.500 4.500 7.500 5.800 7.500 7 6.500 7 5.500M10 7.200c1-1.600 4.500-1.400 4.500.8V12.500M14.500 9c-5.500 0-5 3.500-2.700 3.500 1.500 0 2.700-1 2.700-2" strokeWidth="1.100" />
      </Icon>
      <Drop label="消除锯齿" value="锐利" w={97} h={23} pl={8} />
    </Segment>
    <Segment $gap={2} $pad="0 7px 0 6px">
      {alignments.map((a, i) => (
        <IconButton key={a.name} $on={i === 0} aria-label={a.name}>
          <AlignIcon rows={a.rows} />
        </IconButton>
      ))}
    </Segment>
    <Segment $w={39}>
      <ColorChip aria-label="文本颜色" />
    </Segment>
    <Segment $w={40}>
      <IconButton aria-label="创建文字变形">
        <Icon size={18}>
          <path d="M6 4.500c2-2 6-2 8 0M10.300 3.500 9.700 13M7.500 13h4.500M2 18c4-4 12-4 16 0" strokeWidth="1.500" />
        </Icon>
      </IconButton>
    </Segment>
    <Segment $w={41}>
      <IconButton aria-label="切换字符和段落面板">
        <Icon size={18}>
          <path d="M1 2h7l1 2.500h9.500V18.500H1z" fill="currentColor" stroke="none" />
          <path d="M4 8h2M8 8h8M4 11h2M8 11h8M4 14h2M8 14h8" stroke="#444" />
          <path d="M10 2.500h8" />
        </Icon>
      </IconButton>
    </Segment>
    <Segment $w={41} $last>
      <IconButton aria-label="3D">
        <Icon size={18}>
          <path d="M2 5.500c1.500-1.500 6-1.500 5.500 1.500-.2 1.800-2 2.300-3.500 2.300 2 0 4.500.6 4.200 3-.4 3.200-5 3.500-6.700 1.500M11.500 4.500v11c4.500.6 6.500-1.500 6.500-5.500s-2-6-6.500-5.500z" strokeWidth="2.300" />
        </Icon>
      </IconButton>
    </Segment>
    <Spacer />
    <Segment $gap={5} $pad="0 8px 0 0" $last>
      <IconButton aria-label="搜索">
        <Icon size={17}>
          <circle cx="8.500" cy="8.500" r="6.300" strokeWidth="1.700" />
          <path d="M13 13l5.500 5.500" strokeWidth="2" />
        </Icon>
      </IconButton>
      <IconButton $w={44} $gap={9} aria-label="工作区">
        <Icon w={16} h={13} box="0 0 16 13">
          <path d="M.7.7h14.600v11.600H.7z" />
          <path d="M2.500 3h3v7h-3zM2.500 5.300h3M2.500 7.700h3" strokeWidth="1" />
        </Icon>
        <Chevron />
      </IconButton>
      <IconButton $w={20} aria-label="共享">
        <Icon size={18}>
          <path d="M6 7H1.500v11.500h17V7H14M10 13V2.500M6.500 5.500 10 2l3.500 3.500" strokeWidth="1.900" />
        </Icon>
      </IconButton>
    </Segment>
  </OptionsBar>
);

const Close = () => (
  <CloseX aria-label="关闭">
    <Icon size={7} box="0 0 7 7">
      <path d="M.5.5l6 6M6.500.5l-6 6" stroke="#bbb" strokeWidth="1" />
    </Icon>
  </CloseX>
);

const Document = () => (
  <DocColumn>
    <DocTabs>
      <DocTab>
        <button>封面.psd @ 71.6% (PS如何绘制波浪线条图案？, RGB/8#)</button>
        <Close />
      </DocTab>
      <DocTab $on>
        <button>未标题-1 @ 72% (100元, RGB/8#) *</button>
        <Close />
      </DocTab>
    </DocTabs>
    <DocBody>
      <Viewport>
        <Artboard>
          <Coupon>
            <svg width="332" height="203" viewBox="0 0 332 203" aria-hidden="true">
              <path d="M0 0h233v203H0z" fill="#f9d74f" />
              <path d={toothedEdge()} fill="#ffcd00" />
            </svg>
            <CouponText>
              <Amount>100元</Amount>
              <Validity>2020年11.11-12.12使用</Validity>
            </CouponText>
          </Coupon>
          <Arrow width="306" height="192" viewBox="0 0 306 192" aria-hidden="true">
            <path d="M0 0H19L14.500 3.500 304 188l-.5 1L44 33 10.500 11.500 9 16.500z" fill="#fb2113" />
          </Arrow>
        </Artboard>
      </Viewport>
      <VScroll />
    </DocBody>
    <StatusBar>
      <StatusItem $w={48} $bg="#424242">72.03%</StatusItem>
      <StatusItem $bg={c.panel}>
        1000 像素 x 500 像素 (72 ppi)
        <Icon w={6} h={10} box="0 0 6 10">
          <path d="M1 1l4 4-4 4" strokeWidth="1.200" />
        </Icon>
      </StatusItem>
    </StatusBar>
  </DocColumn>
);

const Gradients = () => (
  <>
    <PanelTabs role="tablist">
      {["颜色", "色板", "渐变", "图案"].map((t) => (
        <PanelTab key={t} role="tab" $on={t === "渐变"}>{t}</PanelTab>
      ))}
      <TabFill><MenuLines /></TabFill>
    </PanelTabs>
    <Recent>
      {recent.map((bg, i) => (
        <Swatch key={i} $bg={bg} $size={16} aria-label={`最近渐变 ${i + 1}`} />
      ))}
    </Recent>
    <PresetArea>
      <PresetList>
        <GroupHead><Chevron /><FolderOutline /><span>基础</span></GroupHead>
        <SwatchGrid>
          <Swatch $bg={bw} $size={30} aria-label="前景色到背景色" />
          <Swatch $bg={fade} $size={30} aria-label="前景色到透明" />
          <Swatch $bg={bw} $size={30} $on aria-label="黑，白" />
        </SwatchGrid>
        <GroupHead><Chevron /><FolderOutline /><span>蓝色</span></GroupHead>
        <SwatchGrid>
          {blues.map((bg, i) => (
            <Swatch key={i} $bg={bg} $size={30} aria-label={`蓝色 ${i + 1}`} />
          ))}
        </SwatchGrid>
      </PresetList>
      <PresetScroll><Chevron up /><Thumb /><Chevron /></PresetScroll>
    </PresetArea>
    <PanelFoot $h={25} $gap={14}>
      <FootButton aria-label="新建组"><FolderSolid /></FootButton>
      <FootButton aria-label="新建渐变"><PlusBox /></FootButton>
      <FootButton aria-label="删除渐变"><TrashIcon /></FootButton>
    </PanelFoot>
  </>
);

const Percent = ({ label }: { label: string }) => (
  <PercentLabel>
    {label}
    <PercentBox>
      <input defaultValue="100%" aria-label={label} />
      <button aria-label="展开"><Chevron /></button>
    </PercentBox>
  </PercentLabel>
);

const SearchWrap = styled.span`
  display: grid;
  align-items: center;
  flex: none;
  margin-right: 5px;
  > * { grid-area: 1 / 1; }
  > svg { margin-left: 6px; pointer-events: none; }
`;
const SearchDrop = () => (
  <SearchWrap>
    <Drop label="图层过滤类型" value="类型" w={86} h={23} pl={21} />
    <Icon size={12} box="0 0 12 12">
      <circle cx="5" cy="5" r="3.500" strokeWidth="1.600" />
      <path d="M7.500 7.500l3.500 3.500" strokeWidth="2" />
    </Icon>
  </SearchWrap>
);

const Layers = () => (
  <>
    <PanelTabs role="tablist">
      {["图层", "通道", "路径"].map((t) => (
        <PanelTab key={t} role="tab" $on={t === "图层"}>{t}</PanelTab>
      ))}
      <TabFill><MenuLines /></TabFill>
    </PanelTabs>
    <LayerRowBar $h={33} $gap={9} $pt={6}>
      <SearchDrop />
      <IconButton $w={15} aria-label="像素图层">
        <Icon w={13} h={11} box="0 0 13 11">
          <path d="M.6.6h11.800v9.800H.6z" strokeWidth="1.200" />
          <path d="M2 8.500 5 4.500l1.500 2L8.500 4l2.500 4.500z" fill="currentColor" stroke="none" />
        </Icon>
      </IconButton>
      <IconButton $w={15} aria-label="调整图层"><AdjustIcon /></IconButton>
      <IconButton $w={15} aria-label="文字图层"><TypeIcon size={14} /></IconButton>
      <IconButton $w={15} aria-label="形状图层"><ShapeBoxIcon /></IconButton>
      <IconButton $w={15} aria-label="智能对象">
        <Icon size={13} box="0 0 13 13">
          <path d="M4.500 4V1h4.500l2.500 2.500V12H8M8.500 1v3h3" strokeWidth="1.200" />
          <path d="M1 6h6v6H1z" fill="currentColor" stroke="none" />
        </Icon>
      </IconButton>
      <FilterToggle aria-label="图层过滤开关" />
    </LayerRowBar>
    <LayerRowBar $h={30} $gap={6}>
      <Drop label="混合模式" value="正常" w={117} h={23} pl={8} />
      <Percent label="不透明度:" />
    </LayerRowBar>
    <LayerRowBar $h={29} $gap={7} $pl={6}>
      <span>锁定:</span>
      <IconButton $w={15} $dim aria-label="锁定透明像素">
        <Icon size={12} box="0 0 12 12">
          <path d="M.5.5h11v11H.5z" strokeWidth="1" />
          <path d="M1 1h3.500v3.500H1zM7.500 1H11v3.500H7.500zM4.500 4.500h3v3h-3zM1 7.500h3.500V11H1zM7.500 7.500H11V11H7.500z" fill="currentColor" stroke="none" />
        </Icon>
      </IconButton>
      <IconButton $w={15} $dim aria-label="锁定图像像素"><BrushIcon size={14} /></IconButton>
      <IconButton $w={15} aria-label="锁定位置"><MoveIcon size={14} /></IconButton>
      <IconButton $w={15} aria-label="防止在画板内外自动嵌套">
        <Icon size={14} box="0 0 14 14">
          <path d="M3 1v12M0 3.500h8M11 6v8M1 11.500h13M8 3.500 11 6.500" strokeWidth="1.200" />
          <path d="M11 1v3h3" strokeWidth="1.200" />
        </Icon>
      </IconButton>
      <IconButton $w={15} aria-label="锁定全部"><LockIcon /></IconButton>
      <Percent label="填充:" />
    </LayerRowBar>
    <LayerArea>
      <LayerList>
        {layers.map((l) => (
          <LayerItem key={l.name}>
            <EyeButton aria-label="指示图层可见性"><EyeIcon /></EyeButton>
            <LayerBody $on={l.on}>
              <LayerThumb>{l.thumb}</LayerThumb>
              {l.mask && (
                <MaskGroup>
                  <Icon w={8} h={15} box="0 0 8 15">
                    <path d="M1.500 6V3a2.500 2.500 0 0 1 5 0v3M1.500 9v3a2.500 2.500 0 0 0 5 0V9M4 4.500v6" strokeWidth="1.400" />
                  </Icon>
                  <Icon w={32} h={17} box="0 0 32 17">
                    <path d="M.5.5h31v16H.5z" fill="#fff" stroke="#222" strokeWidth="1" />
                    <path d="M17 2h5l-1 2v10h-4z" fill="#000" stroke="none" />
                  </Icon>
                </MaskGroup>
              )}
              <span>{l.name}</span>
              {l.mask && (
                <LayerEnd>
                  <Icon w={14} h={14} box="0 0 14 14">
                    <circle cx="5" cy="8" r="4" strokeWidth="1.100" />
                    <circle cx="8.500" cy="6" r="4.500" fill={c.panel} strokeWidth="1.100" />
                  </Icon>
                  <FoldButton aria-label="折叠图层效果"><Chevron up /></FoldButton>
                </LayerEnd>
              )}
            </LayerBody>
          </LayerItem>
        ))}
        <SubRow $h={39} $pr={11}>
          <Icon w={13} h={10} box="0 0 13 10">
            <path d="M0 2.500h13M0 7.500h13" strokeWidth="1.200" />
            <path d="M3 2.500 5.500 0v2.500zM6 2.500h4L8 5zM8 7.500h4L10 10z" fill="currentColor" stroke="none" />
          </Icon>
        </SubRow>
        <SubRow $h={26} $pr={15}><LockIcon open /></SubRow>
        <Hint>。</Hint>
      </LayerList>
      <LayerScroll />
    </LayerArea>
    <PanelFoot $h={24} $gap={12}>
      <FootButton $dim aria-label="链接图层">
        <Icon w={14} h={8} box="0 0 14 8">
          <path d="M6 1.500H3.500a2.500 2.500 0 0 0 0 5H6M8 1.500h2.500a2.500 2.500 0 0 1 0 5H8M4.500 4h5" strokeWidth="1.200" />
        </Icon>
      </FootButton>
      <FootButton aria-label="添加图层样式">fx</FootButton>
      <FootButton aria-label="添加图层蒙版">
        <Icon w={13} h={11} box="0 0 13 11">
          <path d="M0 0h13v11H0zM6.500 2.500a3 3 0 1 0 0 6 3 3 0 0 0 0-6z" fill="currentColor" stroke="none" fillRule="evenodd" />
        </Icon>
      </FootButton>
      <FootButton aria-label="创建调整图层"><AdjustIcon /></FootButton>
      <FootButton aria-label="创建新组"><FolderSolid /></FootButton>
      <FootButton aria-label="创建新图层"><PlusBox /></FootButton>
      <FootButton aria-label="删除图层"><TrashIcon /></FootButton>
    </PanelFoot>
  </>
);

export default function App() {
  return (
    <>
      <GlobalStyle />
      <Shell>
        <MenuBar>
          <AppMark>Ps</AppMark>
          {menus.map(([t, k]) => (
            <MenuItem key={k}>{t}(<u>{k}</u>)</MenuItem>
          ))}
          <WindowButtons>
            <WindowButton aria-label="最小化"><Icon w={11} h={2} box="0 0 11 2"><path d="M0 1h11" strokeWidth="2" /></Icon></WindowButton>
            <WindowButton aria-label="还原"><Icon w={9} h={3} box="0 0 9 3"><path d="M0 1.500h9" strokeWidth="3" /></Icon></WindowButton>
            <WindowButton aria-label="关闭窗口" $wide />
          </WindowButtons>
        </MenuBar>
        <Options />
        <Work>
          <ToolColumn>
            <Collapse aria-label="展开工具栏"><DoubleChevron /></Collapse>
            <Grip $m="3px 8px 9px" />
            <ToolList>
              {tools.map((t) => (
                <Tool key={t.name} aria-label={t.name} $plain={t.plain} $on={t.name === "横排文字工具"}>
                  {t.icon}
                </Tool>
              ))}
            </ToolList>
            <ColorTools>
              <Icon size={11} box="0 0 11 11">
                <path d="M4 4h7v7H4z" fill="#e8e8e8" stroke="none" />
                <path d="M.6.6h6v6h-6z" fill="#111" stroke="#e8e8e8" strokeWidth="1.200" />
              </Icon>
              <Icon size={11} box="0 0 11 11">
                <path d="M2 3h6.500v6" strokeWidth="1.300" />
                <path d="M0 3l3.500-3v6zM8.500 11l-3-3.500h5.500z" fill="currentColor" stroke="none" />
              </Icon>
            </ColorTools>
            <ColorPair>
              <ColorWell $front aria-label="前景色" />
              <ColorWell aria-label="背景色" />
            </ColorPair>
            <QuickMask aria-label="快速蒙版">
              <Icon w={17} h={12} box="0 0 17 12">
                <path d="M.7.7h15.600v10.600H.7z" />
                <circle cx="8.500" cy="6" r="3" strokeDasharray="1.300 1" />
              </Icon>
            </QuickMask>
          </ToolColumn>
          <Document />
          <IconDock>
            <Collapse $end aria-label="展开面板"><DoubleChevron left /></Collapse>
            <DockGroup $h={41}>
              <Grip />
              <IconButton $h={28} aria-label="历史记录">
                <Icon size={18}>
                  <path d="M2.500 2h4v4h-4zM2.500 8.500h4v4h-4z" strokeWidth="1.300" />
                  <path d="M2 14h5v5H2z" fill="currentColor" stroke="none" />
                  <path d="M12 17.500c5-2.500 5-8.500 1.500-12" strokeWidth="2.300" />
                  <path d="M9.500 10V2.500h7.500z" fill="currentColor" stroke="none" />
                </Icon>
              </IconButton>
            </DockGroup>
            <DockGroup $h={41}>
              <Grip />
              <IconButton $h={28} aria-label="库">
                <Icon size={18}>
                  <path d="M6 1.500 10.500 3.500v5L6 11 1.500 8.500v-5zM1.500 3.500 6 6l4.500-2.500M6 6v5" strokeWidth="1.400" />
                  <path d="M13 2h4.500v4H13zM13 7.500h4.500v4H13zM1 13.500h17V18H1z" fill="currentColor" stroke="none" />
                  <path d="M13 15l2 2 2-2" stroke="#444" strokeWidth="1" />
                </Icon>
              </IconButton>
            </DockGroup>
            <DockGroup $h={69}>
              <Grip />
              <IconButton $h={28} aria-label="字符"><DockGlyph>A|</DockGlyph></IconButton>
              <IconButton $h={28} aria-label="段落"><DockGlyph>¶</DockGlyph></IconButton>
            </DockGroup>
          </IconDock>
          <Panels>
            <Collapse $end aria-label="折叠面板"><DoubleChevron /></Collapse>
            <Gradients />
            <PanelGap />
            <Layers />
          </Panels>
        </Work>
        <Meter />
        <Watermark>
          <UnderMark>
            <svg width="140" height="80" viewBox="0 0 140 80" aria-hidden="true">
              <path d="M1 33h6v41H1z" fill="#c8ccd4" />
              <ellipse cx="109" cy="11" rx="9" ry="11" fill="#c8c8c8" />
              <ellipse cx="131" cy="11" rx="9" ry="11" fill="#c8c8c8" />
            </svg>
            <span>j</span>
          </UnderMark>
          <BrandCard>
            <svg width="48" height="52" viewBox="0 0 48 52" fill="none" stroke="currentColor" strokeWidth="4" strokeLinecap="round" aria-hidden="true">
              <path d="M18 40c-4 2-8 0-8-5V10c0-6 5-9 10-6l21 13c5 3 5 9 0 12L19 46C11 52 2 47 2 38V12C2 9 3 7 4 6" />
              <path d="M18 18l10 6.500L18 31z" fill="currentColor" stroke="none" />
              <path d="M31 21v8" strokeWidth="2" />
            </svg>
            <BrandText>
              <strong>溜溜自学</strong>
              <span>zixue.3D66.COM</span>
            </BrandText>
          </BrandCard>
        </Watermark>
      </Shell>
    </>
  );
}
